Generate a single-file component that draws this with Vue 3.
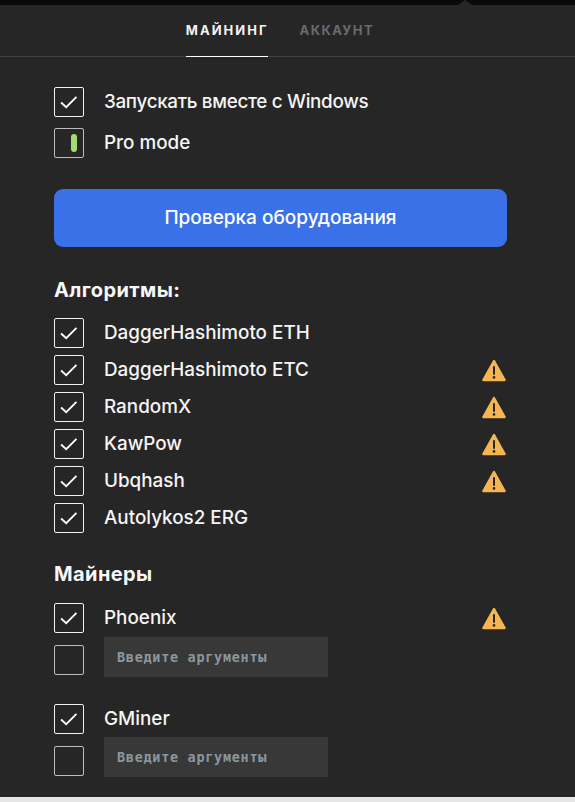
<template>
  <div class="page">
    <div class="topbar"><span class="notch"></span></div>
    <div class="panel">
      <nav class="tabs">
        <a class="tab active">МАЙНИНГ</a>
        <a class="tab">АККАУНТ</a>
      </nav>

      <div class="content">
        <div class="general">
          <label class="row">
            <span class="box"><svg viewBox="0 0 30 30" class="check"><path d="M6.5 15.5l5.5 5L23 9.5" /></svg></span>
            <span class="label cyr">Запускать вместе с Windows</span>
          </label>
          <label class="row">
            <span class="box dim"><i class="pro"></i></span>
            <span class="label">Pro mode</span>
          </label>
        </div>

        <button class="btn">Проверка оборудования</button>

        <h3 class="title">Алгоритмы:</h3>
        <div class="algos">
          <label v-for="a in algos" :key="a.name" class="row">
            <span class="box"><svg viewBox="0 0 30 30" class="check"><path d="M6.5 15.5l5.5 5L23 9.5" /></svg></span>
            <span class="label">{{ a.name }}</span>
            <svg v-if="a.warn" viewBox="0 0 24 23" class="warn">
              <path d="M12 2L22.6 21H1.4z" fill="#f4b552" stroke="#f4b552" stroke-width="2.4" stroke-linejoin="round" />
              <path d="M12 8v7" stroke="#262626" stroke-width="2" stroke-linecap="round" />
              <circle cx="12" cy="18.4" r="1.3" fill="#262626" />
            </svg>
          </label>
        </div>

        <h3 class="title miners-title">Майнеры</h3>
        <div v-for="m in miners" :key="m.name" class="miner">
          <label class="row">
            <span class="box"><svg viewBox="0 0 30 30" class="check"><path d="M6.5 15.5l5.5 5L23 9.5" /></svg></span>
            <span class="label">{{ m.name }}</span>
            <svg v-if="m.warn" viewBox="0 0 24 23" class="warn">
              <path d="M12 2L22.6 21H1.4z" fill="#f4b552" stroke="#f4b552" stroke-width="2.4" stroke-linejoin="round" />
              <path d="M12 8v7" stroke="#262626" stroke-width="2" stroke-linecap="round" />
              <circle cx="12" cy="18.4" r="1.3" fill="#262626" />
            </svg>
          </label>
          <div class="args">
            <span class="box dim"></span>
            <input class="input" placeholder="Введите аргументы" />
          </div>
        </div>
      </div>
    </div>
    <div class="bottom"></div>
  </div>
</template>

<script setup>
const algos = [
  { name: 'DaggerHashimoto ETH' },
  { name: 'DaggerHashimoto ETC', warn: true },
  { name: 'RandomX', warn: true },
  { name: 'KawPow', warn: true },
  { name: 'Ubqhash', warn: true },
  { name: 'Autolykos2 ERG' }
]
const miners = [
  { name: 'Phoenix', warn: true },
  { name: 'GMiner' }
]
</script>

<style>
html, body {
  margin: 0;
  background: #262626;
  overflow: hidden;
}
</style>

<style scoped>
.page {
  width: 575px;
  height: 802px;
  display: flex;
  flex-direction: column;
  font-family: "Inter", "Open Sans", sans-serif;
  color: #fff;
}
.topbar {
  height: 5px;
  background: #090909;
  position: relative;
  flex: none;
}
.notch {
  position: absolute;
  left: 458px;
  top: 0;
  width: 0;
  height: 0;
  border-left: 7px solid transparent;
  border-right: 7px solid transparent;
  border-bottom: 5px solid #262626;
}
.panel {
  flex: 1;
  min-height: 0;
  overflow: hidden;
  background: #262626;
}
.bottom {
  height: 5px;
  background: #e6e6e6;
  flex: none;
}
.tabs {
  height: 52px;
  box-sizing: border-box;
  border-bottom: 1px solid #424242;
  display: flex;
  justify-content: center;
  gap: 31px;
  padding-right: 15px;
}
.tab {
  box-sizing: border-box;
  height: 52px;
  text-align: center;
  padding-top: 17px;
  font-size: 13px;
  line-height: 16px;
  font-weight: 700;
  letter-spacing: 1.45px;
  color: #686b6f;
  white-space: nowrap;
}
.tab.active {
  color: #f2f2f2;
  letter-spacing: 2px;
  border-bottom: 1px solid #fff;
}
.content {
  padding: 30px 68px 0 54px;
}
.general {
  display: flex;
  flex-direction: column;
  gap: 11px;
}
.row {
  display: flex;
  align-items: center;
  height: 30px;
}
.box {
  box-sizing: border-box;
  flex: none;
  width: 30px;
  height: 30px;
  border: 1px solid #f2f2f2;
  border-radius: 2px;
  display: flex;
  align-items: center;
  justify-content: center;
}
.box.dim {
  border-color: #bdbdbd;
}
.check {
  width: 28px;
  height: 28px;
  fill: none;
  stroke: #fff;
  stroke-width: 2;
}
.pro {
  width: 6px;
  height: 18px;
  margin-left: 10px;
  border-radius: 3px;
  background: #a6d96f;
}
.label {
  margin-left: 20px;
  padding-bottom: 2px;
  font-size: 18.85px;
  font-weight: 500;
  color: #f5f5f5;
  white-space: nowrap;
}
.label.cyr {
  letter-spacing: -0.32px;
}
.warn {
  width: 24px;
  height: 23px;
  margin-left: auto;
  margin-right: 1px;
}
.btn {
  display: block;
  width: 453px;
  height: 58px;
  margin-top: 31px;
  padding: 0 0 2px;
  border: 0;
  border-radius: 9px;
  background: #3b71e8;
  color: #fff;
  font: 500 19px "Inter", "Open Sans", sans-serif;
}
.title {
  margin: 31px 0 0;
  font-size: 20px;
  line-height: 24px;
  font-weight: 700;
  letter-spacing: 0.4px;
  color: #f7f7f7;
}
.algos {
  margin-top: 16px;
  display: flex;
  flex-direction: column;
  gap: 7px;
}
.miners-title {
  margin-top: 29px;
  margin-bottom: 17px;
}
.miner {
  margin-bottom: 27px;
}
.args {
  display: flex;
  align-items: flex-start;
  gap: 20px;
  margin-top: 4px;
}
.miner:last-child .args {
  margin-top: 3px;
}
.args .box {
  margin-top: 8px;
}
.miner:last-child .args .box {
  margin-top: 9px;
}
.input {
  box-sizing: border-box;
  width: 224px;
  height: 40px;
  padding: 0 13px;
  border: 0;
  background: #383838;
  color: #fff;
  font: 700 13.5px "DejaVu Sans Mono", "Liberation Mono", monospace;
  letter-spacing: 0.7px;
}
.input::placeholder {
  color: #8b979f;
  opacity: 1;
}
</style>
